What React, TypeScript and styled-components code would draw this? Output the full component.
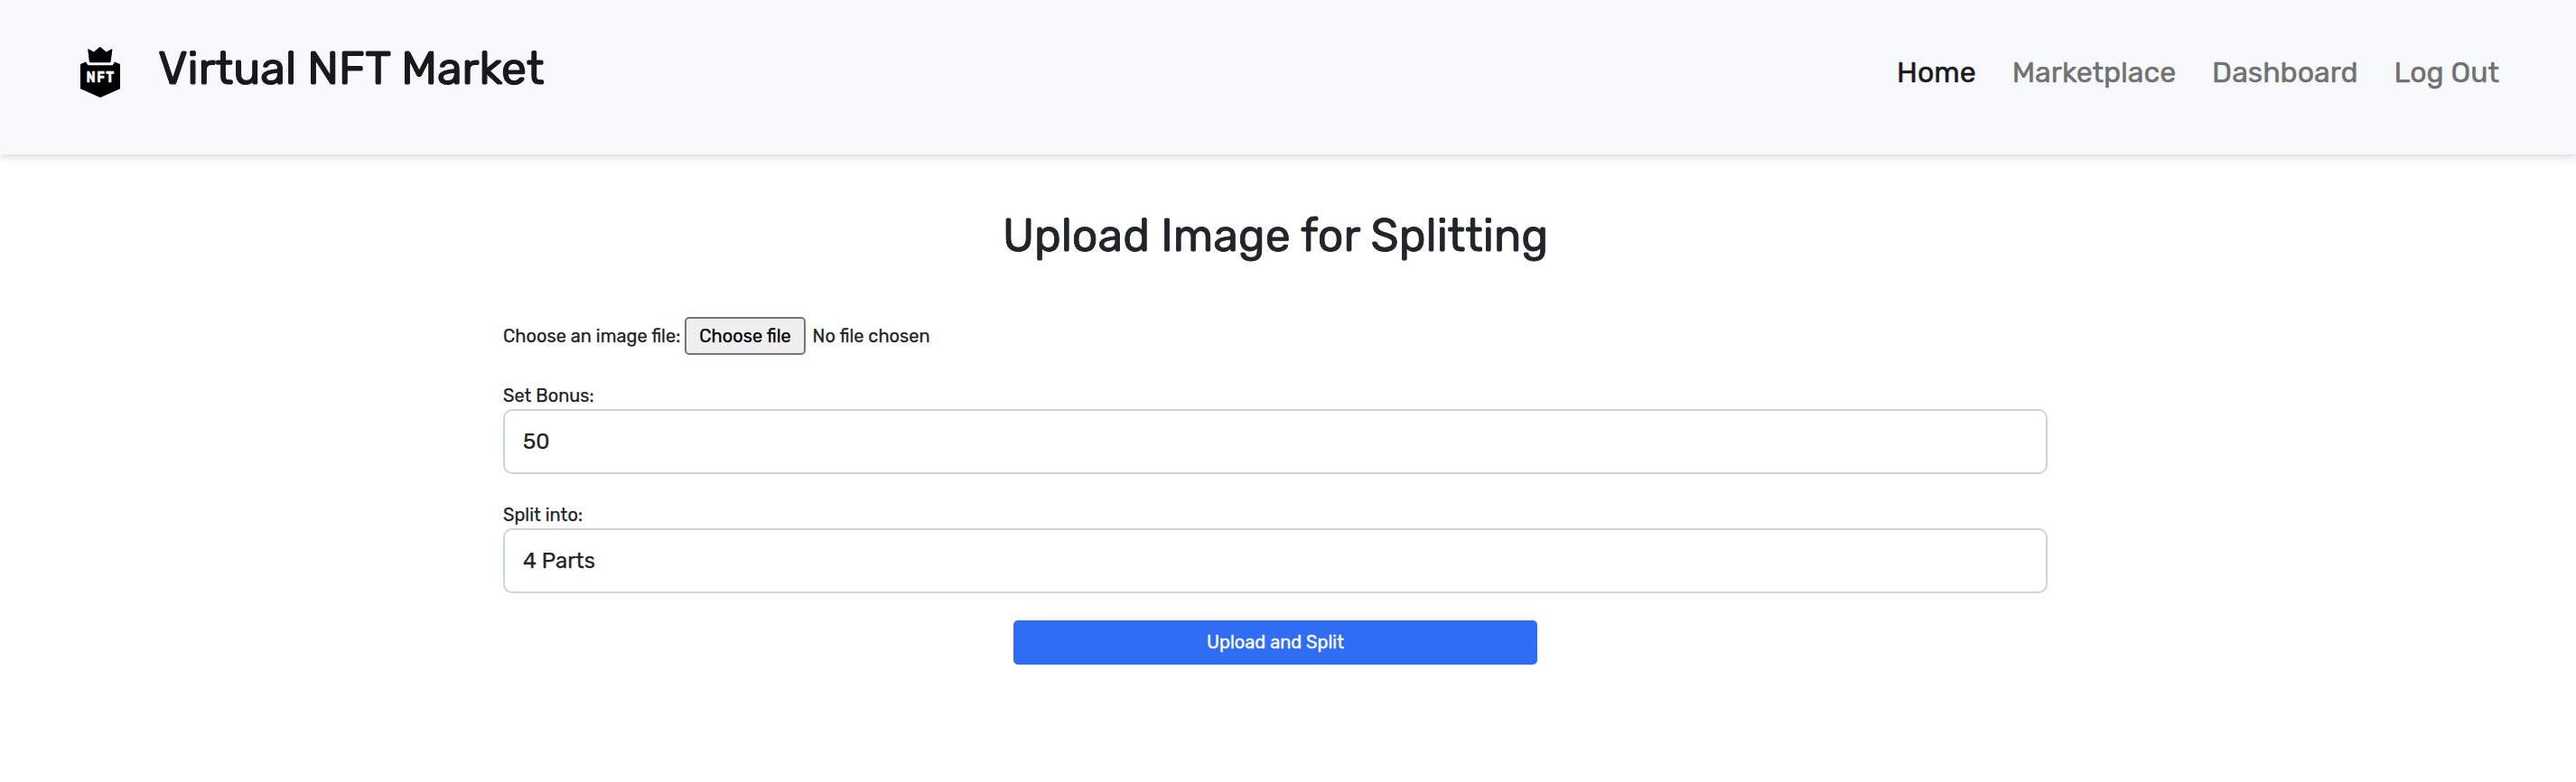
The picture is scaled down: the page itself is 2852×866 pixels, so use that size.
import React from 'react';
import styled, { createGlobalStyle } from 'styled-components';

const GlobalStyle = createGlobalStyle`
  *, *::before, *::after { box-sizing: border-box; }
  body {
    margin: 0;
    background: #fff;
    color: #212529;
    font-family: Rubik, Roboto, "Liberation Sans", sans-serif;
    font-size: 20px;
    line-height: 30px;
    -webkit-text-stroke: 0.25px currentColor;
  }
  h1, h2 { margin: 0; }
  button, input, select { font-family: inherit; }
`;

const Header = styled.header`
  display: flex;
  align-items: flex-start;
  justify-content: space-between;
  height: 171px;
  padding: 46px 85px 0 89px;
  background: #f8f9fb;
  box-shadow: 0 4px 8px rgba(0, 0, 0, 0.12);
`;

const Brand = styled.div`
  display: flex;
  gap: 42px;
`;

const Logo = styled.svg`
  width: 44px;
  height: 56px;
  margin-top: 6px;
`;

const BrandName = styled.h1`
  font-size: 50px;
  font-weight: 400;
  line-height: 60px;
  color: #191919;
  -webkit-text-stroke: 1.2px currentColor;
`;

const Nav = styled.nav`
  display: flex;
  gap: 40px;
  margin-top: 10px;
`;

const NavLink = styled.a<{ $active?: boolean }>`
  font-size: 32px;
  line-height: 48px;
  text-decoration: none;
  color: ${({ $active }) => ($active ? '#191919' : '#707171')};
  -webkit-text-stroke: 0.5px currentColor;
`;

const Main = styled.main`
  display: flex;
  flex-direction: column;
  align-items: center;
  width: 2824px;
  padding-top: 60px;
`;

const Title = styled.h2`
  font-size: 50px;
  font-weight: 400;
  line-height: 60px;
  -webkit-text-stroke: 0.8px currentColor;
`;

const Form = styled.form`
  display: flex;
  flex-direction: column;
  gap: 30px;
  width: 1710px;
  margin-top: 60px;
`;

const FileRow = styled.div`
  display: flex;
  align-items: center;
  height: 42px;
`;

const FileLabel = styled.label`
  width: 201px;
  white-space: nowrap;
`;

const FileButton = styled.button`
  width: 134px;
  height: 42px;
  padding: 0;
  border: 2px solid #767676;
  border-radius: 5px;
  background: #efefef;
  color: #000;
  font-size: 20px;
`;

const FileStatus = styled.span`
  margin-left: 7.5px;
`;

const Field = styled.div`
  display: flex;
  flex-direction: column;
`;

const Label = styled.label``;

const Input = styled.input`
  height: 72px;
  padding: 0 20px;
  border: 2px solid #ced4da;
  border-radius: 10px;
  background: #fff;
  color: #212529;
  font-size: 24px;
`;

const Select = styled.select`
  appearance: none;
  height: 72px;
  padding: 0 20px;
  border: 2px solid #ced4da;
  border-radius: 10px;
  background: #fff;
  color: #212529;
  font-size: 24px;
`;

const Submit = styled.button`
  align-self: center;
  width: 580px;
  height: 49px;
  padding: 0 0 1px;
  border: 0;
  border-radius: 5px;
  background: #306df5;
  color: #fff;
  font-size: 20px;
  -webkit-text-stroke: 0.35px currentColor;
`;

export default function App() {
  return (
    <>
      <GlobalStyle />
      <Header>
        <Brand>
          <Logo viewBox="0 0 44 56" aria-label="NFT">
            <path d="M8.2 2.6 9 2.2l6 3.4L21 .3h1.6L28.6 5.6l5.9-3.4.9.5L33.6 16.6l-.8.7H10.8l-.9-.7Z" />
            <path d="M0 19 6 16.6 8.4 20.3H35.6L38 16.6 44 19V46.3L22 56 0 46.3Z" />
            <text
              x="6.6"
              y="39"
              fill="#f8f9fb"
              stroke="#f8f9fb"
              strokeWidth="0.4"
              fontSize="16"
              fontWeight="700"
              letterSpacing="1.6"
              textLength="32"
              lengthAdjust="spacingAndGlyphs"
            >
              NFT
            </text>
          </Logo>
          <BrandName>Virtual NFT Market</BrandName>
        </Brand>
        <Nav>
          <NavLink $active>Home</NavLink>
          <NavLink>Marketplace</NavLink>
          <NavLink>Dashboard</NavLink>
          <NavLink>Log Out</NavLink>
        </Nav>
      </Header>
      <Main>
        <Title>Upload Image for Splitting</Title>
        <Form onSubmit={(e) => e.preventDefault()}>
          <FileRow>
            <FileLabel>Choose an image file:</FileLabel>
            <FileButton type="button">Choose file</FileButton>
            <FileStatus>No file chosen</FileStatus>
          </FileRow>
          <Field>
            <Label htmlFor="bonus">Set Bonus:</Label>
            <Input id="bonus" defaultValue="50" />
          </Field>
          <Field>
            <Label htmlFor="parts">Split into:</Label>
            <Select id="parts">
              <option>4 Parts</option>
            </Select>
          </Field>
          <Submit type="submit">Upload and Split</Submit>
        </Form>
      </Main>
    </>
  );
}
